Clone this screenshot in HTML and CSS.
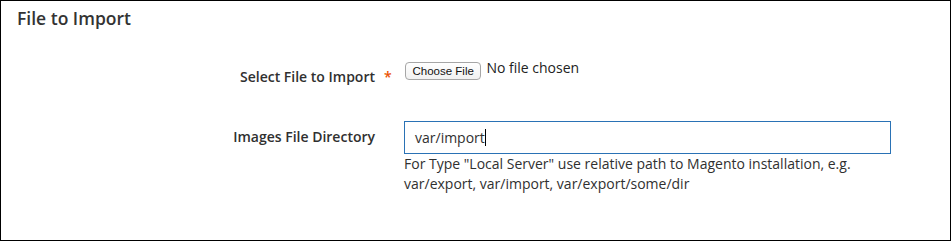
FILE: index.html
```html
<!DOCTYPE html>
<html>
<head>
<meta charset="utf-8">
<link rel="stylesheet" href="styles.css">
</head>
<body>
<div class="frame">
  <fieldset class="fieldset">
    <h2 class="legend">File to Import</h2>
    <div class="field field-file">
      <div class="label"><span>Select File to Import</span><span class="req">*</span></div>
      <div class="control file-control">
        <span class="file-btn">Choose File</span><span class="file-name">No file chosen</span>
      </div>
    </div>
    <div class="field field-dir">
      <div class="label"><span>Images File Directory</span><span class="req"></span></div>
      <div class="control">
        <div class="input"><span>var/import</span><span class="caret"></span></div>
        <div class="note">For Type "Local Server" use relative path to Magento installation, e.g. var/export, var/import, var/export/some/dir</div>
      </div>
    </div>
  </fieldset>
</div>
</body>
</html>
```
FILE: styles.css
```css
html, body {
  margin: 0;
  padding: 0;
  background: #fff;
}
.frame {
  box-sizing: border-box;
  width: 951px;
  height: 241px;
  border: 1px solid #000;
  font-family: "Open Sans", "Liberation Sans", sans-serif;
  color: #303030;
}
.fieldset {
  border: 0;
  margin: 0;
  padding: 0;
}
.legend {
  margin: 0;
  padding: 5px 0 0 16px;
  font-size: 17.5px;
  font-weight: 600;
  line-height: 24px;
  color: #333;
}
.field {
  display: flex;
  align-items: flex-start;
}
.label {
  width: 403px;
  box-sizing: border-box;
  display: flex;
  justify-content: flex-end;
  font-size: 14px;
  font-weight: 600;
  line-height: 20px;
}
.req {
  width: 29px;
  box-sizing: border-box;
  padding-left: 9px;
  color: #eb5202;
  font-size: 14px;
}
.field-file {
  margin-top: 36px;
}
.field-file .label {
  padding-top: 1px;
}
.file-control {
  display: flex;
  align-items: flex-start;
  margin-top: -6px;
  padding-left: 1px;
}
.file-btn {
  display: inline-block;
  box-sizing: border-box;
  height: 18px;
  padding: 0 6.5px;
  margin-top: 2px;
  border: 1px solid #a6a6a6;
  border-radius: 4px;
  background: linear-gradient(#ffffff, #f1f1f1);
  font-family: "Liberation Sans", Arial, sans-serif;
  font-size: 11.5px;
  line-height: 16px;
  color: #111;
}
.file-name {
  margin-left: 5px;
  font-size: 14px;
  line-height: 16px;
  color: #222;
}
.field-dir {
  margin-top: 34px;
}
.field-dir .label {
  padding-top: 6px;
}
.input {
  box-sizing: border-box;
  width: 487px;
  height: 33px;
  border: 1px solid #2a72b5;
  padding: 0 10px;
  display: flex;
  align-items: center;
  font-size: 14px;
  color: #303030;
}
.caret {
  display: inline-block;
  width: 1px;
  height: 17px;
  background: #000;
}
.note {
  width: 480px;
  margin-top: 0;
  font-size: 14px;
  line-height: 20px;
  color: #303030;
}
```
